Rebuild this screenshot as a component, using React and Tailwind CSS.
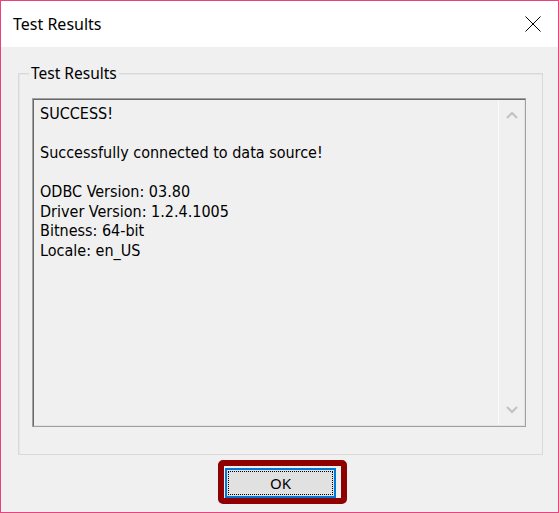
export default function App() {
  const lines = [
    "SUCCESS!",
    "",
    "Successfully connected to data source!",
    "",
    "ODBC Version: 03.80",
    "Driver Version: 1.2.4.1005",
    "Bitness: 64-bit",
    "Locale: en_US",
  ];
  return (
    <div className="w-[559px] h-[513px] border border-[#e8437f] bg-[#f0f0f0] flex flex-col overflow-hidden">
      <div className="h-[46px] bg-white flex items-center justify-between pl-[12px] pr-[17px] shrink-0">
        <span className="font-['Noto_Sans',sans-serif] text-[16px] leading-[20px] text-black">Test Results</span>
        <svg width="16" height="16" viewBox="0 0 16 16" className="block">
          <path d="M0.5 0.5 L15.5 15.5 M15.5 0.5 L0.5 15.5" stroke="#000" strokeWidth="1" fill="none" />
        </svg>
      </div>
      <div className="flex flex-col px-[17px]">
        <div className="relative mt-[26px] w-[525px] h-[382px] border border-[#d9d9d9] shadow-[inset_1px_1px_0_#e6e6e6] pt-[24px] pl-[13px]">
          <span className="absolute top-[-11px] left-[10px] px-[2px] bg-[#f0f0f0] font-['Noto_Sans',sans-serif] text-[15.5px] leading-[20px] text-black">
            Test Results
          </span>
          <div className="w-[494px] h-[329px] border border-[#a0a0a0] shadow-[inset_1px_1px_0_#696969,inset_-1px_-1px_0_#e3e3e3] p-[1px] flex">
            <div className="flex-1 pl-[6px] pt-[4px] font-['DejaVu_Sans_Condensed','DejaVu_Sans',sans-serif] font-stretch-condensed text-[16px] leading-[19.5px] text-black">
              {lines.map((l, i) => (
                <div key={i} className="h-[19.5px] whitespace-pre">{l}</div>
              ))}
            </div>
            <div className="w-[26px] border-l border-[#fafafa] flex flex-col justify-between">
              <div className="h-[30px] flex items-center justify-center">
                <svg width="12" height="8" viewBox="0 0 12 8">
                  <polyline points="1,7 6,2 11,7" stroke="#c2c2c2" strokeWidth="2" fill="none" />
                </svg>
              </div>
              <div className="h-[30px] flex items-center justify-center">
                <svg width="12" height="8" viewBox="0 0 12 8">
                  <polyline points="1,1 6,6 11,1" stroke="#c2c2c2" strokeWidth="2" fill="none" />
                </svg>
              </div>
            </div>
          </div>
        </div>
        <div className="self-start mt-[5px] ml-[200px] border-[6px] border-[#8f0000] rounded-[5px] pl-[1px] pt-[2px] pr-[5px]">
          <div className="w-[111px] h-[30px] bg-[#e1e1e1] border-2 border-[#0078d7] p-[1px]">
            <div className="w-full h-full border border-dotted border-black flex items-center justify-center font-['Noto_Sans',sans-serif] text-[15px] leading-[20px] text-black">
              OK
            </div>
          </div>
        </div>
      </div>
    </div>
  );
}
